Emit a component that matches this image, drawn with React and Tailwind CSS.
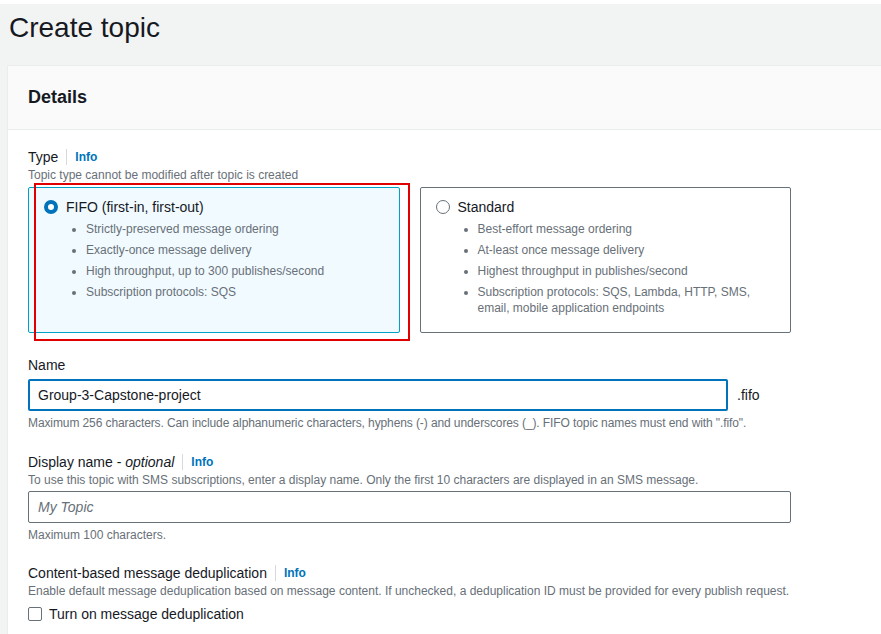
import React from 'react';

const font = { fontFamily: '"Liberation Sans", Arial, sans-serif' };

function Label({ children, info }) {
  return (
    <div className="flex items-center h-[20px] text-[14px] leading-[20px] text-[#16191f]">
      <span>{children}</span>
      {info && (
        <>
          <span className="mx-[8px] w-px h-[16px] bg-[#d5dbdb]" />
          <span className="text-[12px] font-bold text-[#0073bb]">Info</span>
        </>
      )}
    </div>
  );
}

function Hint({ children, className = '' }) {
  return <div className={`text-[12px] leading-[16px] text-[#687078] ${className}`}>{children}</div>;
}

function TypeCard({ title, items, selected }) {
  return (
    <div
      className={`h-[146px] rounded-[2px] border pl-[15px] pr-[24px] pt-[9px] ${
        selected ? 'border-[#00a1c9] bg-[#f1faff]' : 'border-[#687078] bg-white'
      }`}
    >
      <div className="flex items-center gap-[8px] h-[20px]">
        {selected ? (
          <span className="w-[14px] h-[14px] rounded-full border-[4px] border-[#0073bb] bg-white" />
        ) : (
          <span className="w-[14px] h-[14px] rounded-full border-[1.5px] border-[#687078] bg-white" />
        )}
        <span className="text-[14px] text-[#16191f]">{title}</span>
      </div>
      <ul className="mt-[4px] ml-[22px] pl-[20px] list-disc flex flex-col gap-[5px] text-[12px] leading-[16px] text-[#687078] marker:text-[#687078]">
        {items.map((t) => (
          <li key={t}>{t}</li>
        ))}
      </ul>
    </div>
  );
}

export default function App() {
  return (
    <div style={font} className="min-h-[634px] w-full bg-[#f2f3f3] border-t-[4px] border-white overflow-hidden">
      {/* Page title */}
      <div className="pl-[9px] pt-[8px] h-[61px]">
        <h1 className="text-[28px] leading-[32px] font-normal text-[#16191f]">Create topic</h1>
      </div>

      {/* Details panel */}
      <div className="ml-[7px] bg-white border-l border-t border-[#eaeded]">
        <div className="h-[64px] bg-[#fafafa] border-b border-[#eaeded] pl-[20px] flex items-center">
          <h2 className="text-[18px] font-bold text-[#16191f]">Details</h2>
        </div>

        <div className="pl-[20px] pt-[17px] pb-[20px] w-[783px]">
          <Label info>Type</Label>
          <Hint>Topic type cannot be modified after topic is created</Hint>

          <div className="relative mt-[4px] grid grid-cols-2 gap-[20px]">
            <TypeCard
              selected
              title="FIFO (first-in, first-out)"
              items={[
                'Strictly-preserved message ordering',
                'Exactly-once message delivery',
                'High throughput, up to 300 publishes/second',
                'Subscription protocols: SQS',
              ]}
            />
            <TypeCard
              title="Standard"
              items={[
                'Best-effort message ordering',
                'At-least once message delivery',
                'Highest throughput in publishes/second',
                'Subscription protocols: SQS, Lambda, HTTP, SMS, email, mobile application endpoints',
              ]}
            />
            <div className="absolute left-[6px] top-[-4px] w-[376px] h-[158px] border-2 border-[#e00000] pointer-events-none" />
          </div>

          <div className="mt-[22px]">
            <Label>Name</Label>
            <div className="mt-[4px] flex items-center gap-[9px]">
              <div className="w-[700px] h-[32px] rounded-[2px] border-2 border-[#0073bb] flex items-center pl-[8px] text-[14px] text-[#16191f]">
                Group-3-Capstone-project
              </div>
              <span className="text-[14px] text-[#16191f]">.fifo</span>
            </div>
            <Hint className="mt-[4px] tracking-[-0.1px]">
              Maximum 256 characters. Can include alphanumeric characters, hyphens (-) and underscores (_). FIFO topic names must end with ".fifo".
            </Hint>
          </div>

          <div className="mt-[21px]">
            <Label info>
              Display name - <i>optional</i>
            </Label>
            <Hint>To use this topic with SMS subscriptions, enter a display name. Only the first 10 characters are displayed in an SMS message.</Hint>
            <div className="mt-[3px] w-[763px] h-[32px] rounded-[2px] border border-[#687078] flex items-center pl-[9px] text-[14px] italic text-[#687078]">
              My Topic
            </div>
            <Hint className="mt-[4px]">Maximum 100 characters.</Hint>
          </div>

          <div className="mt-[20px]">
            <Label info>Content-based message deduplication</Label>
            <Hint>
              Enable default message deduplication based on message content. If unchecked, a deduplication ID must be provided for every publish request.
            </Hint>
            <div className="mt-[5px] flex items-center gap-[7px] h-[20px]">
              <span className="w-[14px] h-[14px] rounded-[2px] border-[1.5px] border-[#687078] bg-white" />
              <span className="text-[14px] text-[#16191f]">Turn on message deduplication</span>
            </div>
          </div>
        </div>
      </div>
    </div>
  );
}
